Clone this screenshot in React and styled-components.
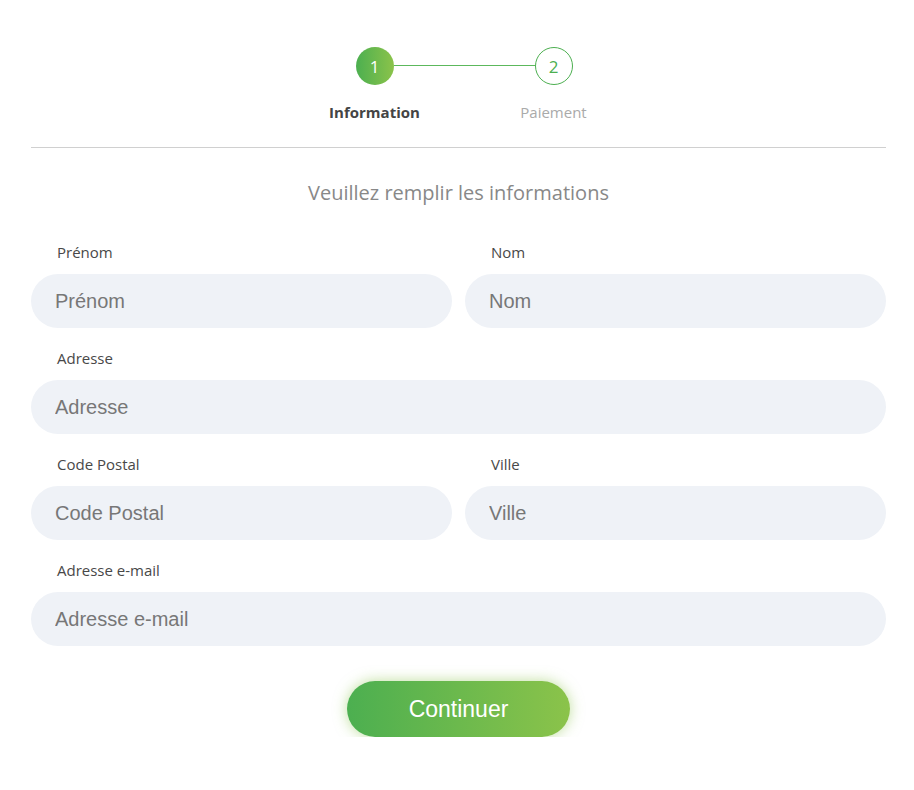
import React from 'react';
import styled, { createGlobalStyle } from 'styled-components';

const GlobalStyle = createGlobalStyle`
  body {
    margin: 0;
    background: #fff;
    font-family: "Open Sans", sans-serif;
  }
`;

const Page = styled.div`
  width: 855px;
  margin-left: 31px;
  padding-top: 47px;
`;

const Stepper = styled.div`
  display: flex;
  justify-content: center;
  align-items: flex-start;
  padding-left: 11px;
`;

const Step = styled.div`
  width: 120px;
  display: flex;
  flex-direction: column;
  align-items: center;
`;

const Circle = styled.div`
  width: 38px;
  height: 38px;
  box-sizing: border-box;
  border-radius: 50%;
  display: flex;
  align-items: center;
  justify-content: center;
  font-size: 17px;
  background: ${p => (p.active ? 'linear-gradient(90deg, #4caf50, #8bc34a)' : '#fff')};
  border: ${p => (p.active ? 'none' : '1px solid #4caf50')};
  color: ${p => (p.active ? '#fff' : '#4caf50')};
`;

const StepLabel = styled.div`
  margin-top: 17px;
  font-size: 15px;
  font-weight: ${p => (p.active ? 700 : 400)};
  color: ${p => (p.active ? '#444' : '#aaa')};
`;

const Connector = styled.div`
  width: 141px;
  height: 1px;
  margin: 18px -41px 0;
  background: #5cb85c;
`;

const Divider = styled.hr`
  border: none;
  border-top: 1px solid #d0d0d0;
  margin: 25px 0 0;
`;

const Title = styled.h2`
  margin: 31px 0 36px;
  text-align: center;
  font-size: 20px;
  font-weight: 400;
  color: #888;
`;

const Form = styled.div`
  display: grid;
  grid-template-columns: 1fr 1fr;
  column-gap: 13px;
  row-gap: 20px;
`;

const Field = styled.div`
  grid-column: ${p => (p.wide ? '1 / -1' : 'auto')};
  display: flex;
  flex-direction: column;
`;

const Label = styled.label`
  padding-left: 26px;
  font-size: 15px;
  line-height: 20px;
  color: #484848;
  margin-bottom: 12px;
`;

const Input = styled.input`
  height: 54px;
  box-sizing: border-box;
  border: none;
  border-radius: 27px;
  background: #eff2f7;
  padding: 0 24px;
  font-family: "Liberation Sans", Arial, sans-serif;
  font-size: 20px;
  color: #333;
  outline: none;
  &::placeholder {
    color: #777;
  }
`;

const Actions = styled.div`
  display: flex;
  justify-content: center;
  margin-top: 35px;
`;

const Button = styled.button`
  width: 223px;
  height: 56px;
  border: none;
  border-radius: 28px;
  background: linear-gradient(90deg, #4caf50, #8bc34a);
  box-shadow: 0 0 14px rgba(139, 195, 74, 0.55);
  color: #fff;
  font-family: "Liberation Sans", Arial, sans-serif;
  font-size: 23px;
  cursor: pointer;
`;

const fields = [
  { name: 'Prénom' },
  { name: 'Nom' },
  { name: 'Adresse', wide: true },
  { name: 'Code Postal' },
  { name: 'Ville' },
  { name: 'Adresse e-mail', wide: true },
];

export default function App() {
  return (
    <Page>
      <GlobalStyle />
      <Stepper>
        <Step>
          <Circle active>1</Circle>
          <StepLabel active>Information</StepLabel>
        </Step>
        <Connector />
        <Step>
          <Circle>2</Circle>
          <StepLabel>Paiement</StepLabel>
        </Step>
      </Stepper>
      <Divider />
      <Title>Veuillez remplir les informations</Title>
      <Form>
        {fields.map(f => (
          <Field key={f.name} wide={f.wide}>
            <Label>{f.name}</Label>
            <Input placeholder={f.name} />
          </Field>
        ))}
      </Form>
      <Actions>
        <Button>Continuer</Button>
      </Actions>
    </Page>
  );
}
